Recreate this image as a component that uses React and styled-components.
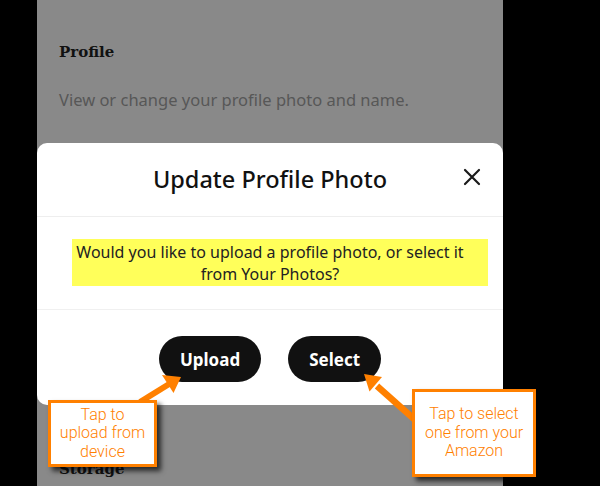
import React from 'react'
import styled, { createGlobalStyle } from 'styled-components'

const GlobalStyle = createGlobalStyle`
    html, body {
        margin: 0;
        padding: 0;
        background: #000;
    }
    * { box-sizing: border-box; }
`

const ORANGE = '#ff8000'

export default function App() {
    return (
        <Stage>
            <GlobalStyle />
            <Screen>
                <SectionTitle top='42px'>Profile</SectionTitle>
                <SectionText>View or change your profile photo and name.</SectionText>

                <Modal>
                    <ModalHeader>
                        <span />
                        <ModalTitle>Update Profile Photo</ModalTitle>
                        <CloseButton aria-label='Close'>
                            <svg width='18' height='18' viewBox='0 0 18 18'>
                                <path d='M2 2 L16 16 M16 2 L2 16' stroke='#1b1b1b' strokeWidth='2.2' strokeLinecap='round' />
                            </svg>
                        </CloseButton>
                    </ModalHeader>
                    <ModalBody>
                        <Highlight>
                            Would you like to upload a profile photo, or select it<br />
                            from Your Photos?
                        </Highlight>
                    </ModalBody>
                    <ModalActions>
                        <PillButton>Upload</PillButton>
                        <PillButton>Select</PillButton>
                    </ModalActions>
                </Modal>

                <SectionTitle top='54px'>Storage</SectionTitle>
            </Screen>

            <Arrows width='600' height='486' viewBox='0 0 600 486'>
                <line x1='140' y1='402' x2='170' y2='383.5' stroke={ORANGE} strokeWidth='6' />
                <polygon points='181,377 173.5,393 162,375' fill={ORANGE} />
                <line x1='414' y1='419' x2='377' y2='386' stroke={ORANGE} strokeWidth='6.5' />
                <polygon points='364,374 382,377 369.5,391.5' fill={ORANGE} />
            </Arrows>

            <Callout left='48px' top='400px' width='109px' height='67px'>
                Tap to<br />upload from<br />device
            </Callout>
            <Callout left='412px' top='389px' width='124px' height='88px'>
                Tap to select<br />one from your<br />Amazon
            </Callout>
        </Stage>
    )
}

const Stage = styled.div`
    position: relative;
    width: 600px;
    height: 486px;
    overflow: hidden;
    background: #000;
    padding-left: 37px;
`
const Screen = styled.div`
    width: 466px;
    height: 486px;
    background: #898989;
    display: flex;
    flex-direction: column;
`
const SectionTitle = styled.h3`
    margin: ${props => props.top} 0 0 22px;
    font-family: 'DejaVu Serif', 'Liberation Serif', serif;
    font-weight: 700;
    font-size: 15px;
    line-height: 20px;
    color: #111;
`
const SectionText = styled.p`
    margin: 28px 0 0 22px;
    font-family: 'Noto Sans', 'Open Sans', sans-serif;
    font-size: 16.5px;
    line-height: 20px;
    color: #575757;
`
const Modal = styled.div`
    margin-top: 33px;
    height: 262px;
    background: #fff;
    border-radius: 10px;
    display: flex;
    flex-direction: column;
    font-family: 'Noto Sans', 'Open Sans', sans-serif;
`
const ModalHeader = styled.div`
    height: 74px;
    display: grid;
    grid-template-columns: 1fr auto 1fr;
    align-items: center;
    border-bottom: 1px solid #eeeeee;
`
const ModalTitle = styled.h2`
    margin: 0 0 2px;
    font-size: 23.5px;
    font-weight: 500;
    color: #111;
`
const CloseButton = styled.button`
    justify-self: end;
    margin: 0 22px 6px 0;
    width: 18px;
    height: 18px;
    padding: 0;
    border: none;
    background: transparent;
    display: flex;
    &:hover { cursor: pointer; }
`
const ModalBody = styled.div`
    height: 93px;
    padding: 22px 15px 0 35px;
    border-bottom: 1px solid #f0f0f0;
`
const Highlight = styled.p`
    margin: 0;
    height: 47px;
    padding: 2px 20px 0 0;
    background: #ffff5a;
    text-align: center;
    font-size: 16px;
    line-height: 22px;
    color: #222;
    white-space: nowrap;
`
const ModalActions = styled.div`
    display: flex;
    justify-content: center;
    gap: 27px;
    padding-top: 26px;
`
const PillButton = styled.button`
    height: 46px;
    padding: 0 21px;
    border: none;
    border-radius: 23px;
    background: #111;
    color: #fff;
    font-family: 'Noto Sans', 'Open Sans', sans-serif;
    font-weight: 700;
    font-size: 17px;
    &:hover { cursor: pointer; }
`
const Arrows = styled.svg`
    position: absolute;
    left: 0;
    top: 0;
    pointer-events: none;
`
const Callout = styled.div`
    position: absolute;
    left: ${props => props.left};
    top: ${props => props.top};
    width: ${props => props.width};
    height: ${props => props.height};
    background: #fff;
    border: 3px solid ${ORANGE};
    box-shadow: 4px 4px 5px rgba(0, 0, 0, 0.7);
    display: flex;
    align-items: center;
    justify-content: center;
    text-align: center;
    font-family: Roboto, 'Liberation Sans', sans-serif;
    font-weight: 300;
    font-size: 16px;
    line-height: 18.5px;
    color: ${ORANGE};
`
